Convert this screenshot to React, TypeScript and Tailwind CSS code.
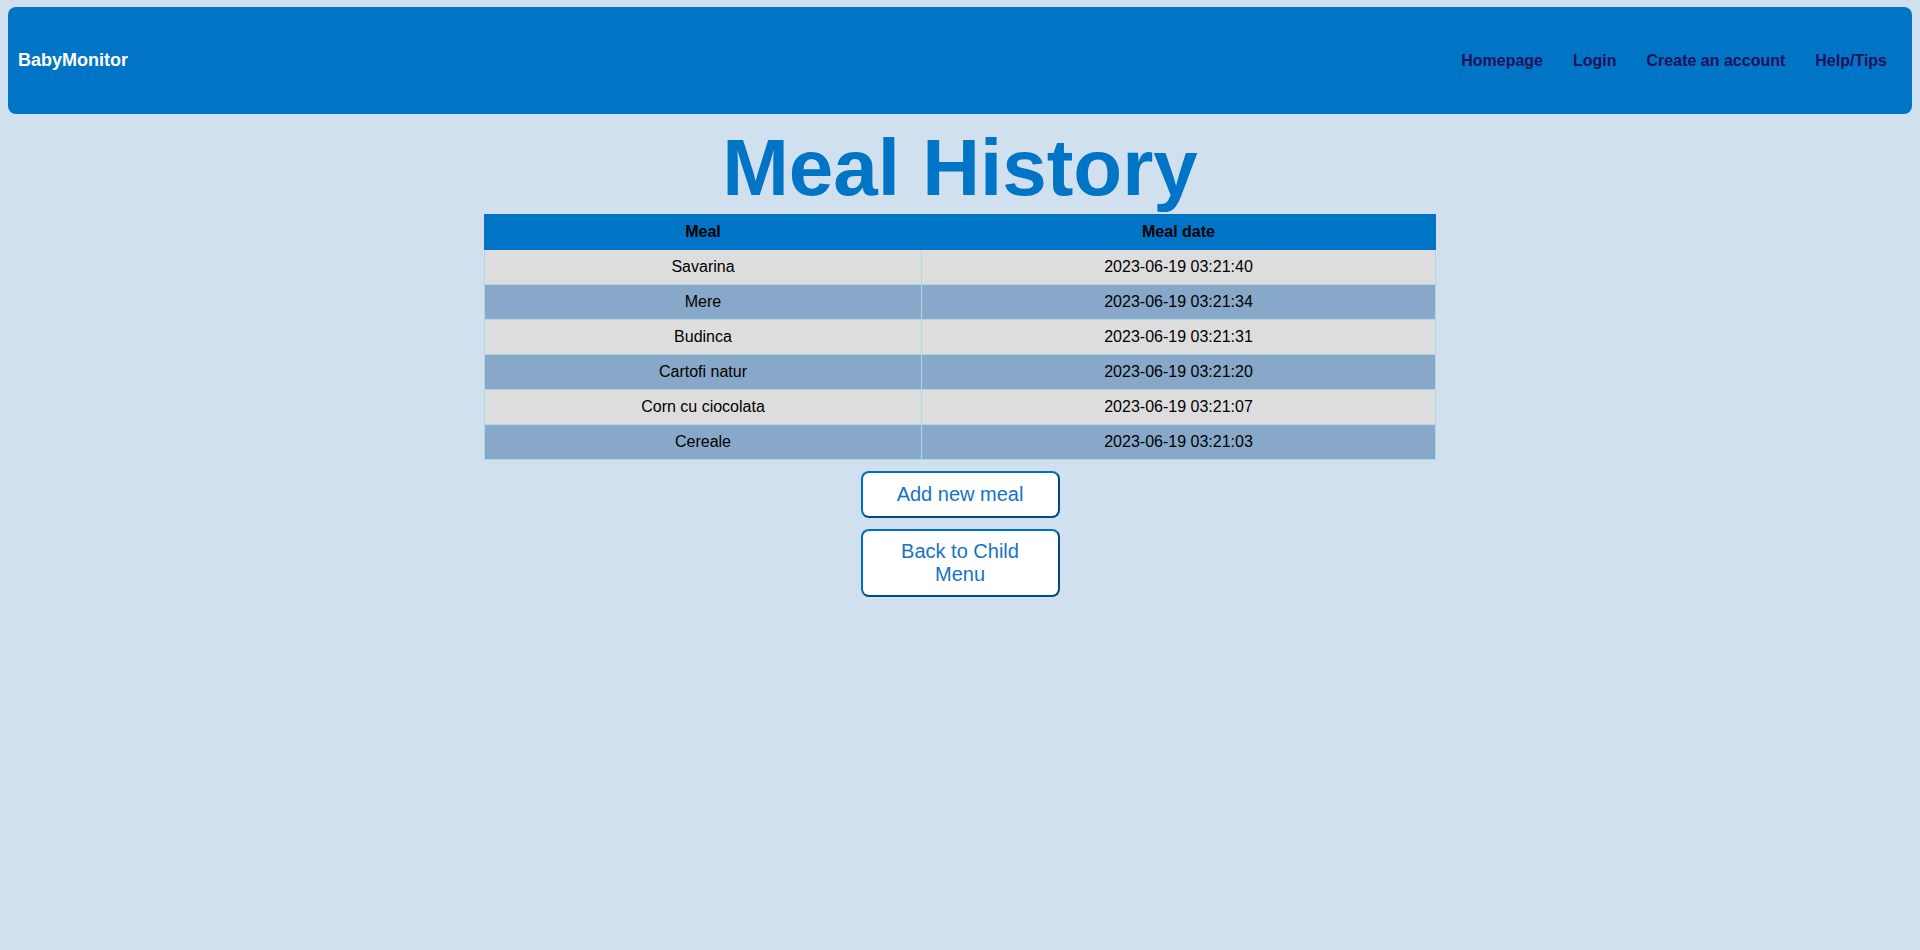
import React from 'react';

const meals = [
  { name: 'Savarina', date: '2023-06-19 03:21:40' },
  { name: 'Mere', date: '2023-06-19 03:21:34' },
  { name: 'Budinca', date: '2023-06-19 03:21:31' },
  { name: 'Cartofi natur', date: '2023-06-19 03:21:20' },
  { name: 'Corn cu ciocolata', date: '2023-06-19 03:21:07' },
  { name: 'Cereale', date: '2023-06-19 03:21:03' },
];

const navItems = ['Homepage', 'Login', 'Create an account', 'Help/Tips'];

function App() {
  return (
    <div className="min-h-screen bg-[#d0e0ef] px-[8px] pt-[7px] font-['Liberation_Sans',Arial,sans-serif]">
      {/* Header */}
      <header className="flex h-[107px] items-center justify-between rounded-lg bg-[#0074c5] pl-[10px] pr-[10px]">
        <span className="text-[18px] font-bold text-white">BabyMonitor</span>
        <nav className="flex items-center">
          {navItems.map((item) => (
            <a key={item} href="#" className="px-[15px] text-[16px] font-bold text-[#22115a]">
              {item}
            </a>
          ))}
        </nav>
      </header>

      <h1 className="mt-[8px] text-center text-[80px] font-bold leading-[92px] text-[#0074c5]">
        Meal History
      </h1>

      <table className="mx-auto w-[952px] border-collapse text-[16px] text-black">
        <thead>
          <tr className="h-[35px] bg-[#0074c5]">
            <th className="w-[437px] border border-[#0074c5] font-bold">Meal</th>
            <th className="border border-[#0074c5] font-bold">Meal date</th>
          </tr>
        </thead>
        <tbody>
          {meals.map((meal, i) => (
            <tr key={meal.date} className={`h-[35px] ${i % 2 === 0 ? 'bg-[#dddddd]' : 'bg-[#87a8c8]'}`}>
              <td className="border border-[#add8e6] text-center">{meal.name}</td>
              <td className="border border-[#add8e6] text-center">{meal.date}</td>
            </tr>
          ))}
        </tbody>
      </table>

      <div className="mt-[11px] flex flex-col items-center gap-[11px]">
        <button className="w-[199px] rounded-lg border-2 border-[#0070c0] border-b-[#004a82] border-r-[#004a82] bg-white py-[10px] text-[20px] leading-[23px] text-[#1573c4]">
          Add new meal
        </button>
        <button className="w-[199px] rounded-lg border-2 border-[#0070c0] border-b-[#004a82] border-r-[#004a82] bg-white px-[20px] py-[9px] text-[20px] leading-[23px] text-[#1573c4]">
          Back to Child Menu
        </button>
      </div>
    </div>
  );
}

export default App;
